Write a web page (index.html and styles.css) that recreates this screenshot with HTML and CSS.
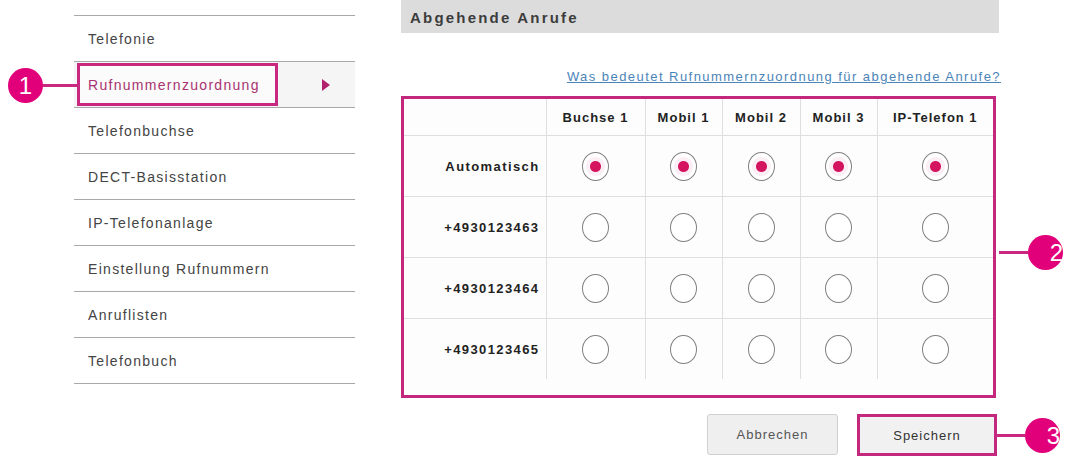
FILE: index.html
```html
<!DOCTYPE html>
<html lang="de">
<head>
    <meta charset="UTF-8">
    <title>Abgehende Anrufe</title>
    <link rel="stylesheet" href="styles.css">
</head>
<body>
    <div class="page">
        <nav class="sidenav">
            <ul>
                <li><a href="#">Telefonie</a></li>
                <li class="active">
                    <span class="callout callout-left">1</span>
                    <a href="#" class="marked">Rufnummernzuordnung</a>
                    <span class="arrow"></span>
                </li>
                <li><a href="#">Telefonbuchse</a></li>
                <li><a href="#">DECT-Basisstation</a></li>
                <li><a href="#">IP-Telefonanlage</a></li>
                <li><a href="#">Einstellung Rufnummern</a></li>
                <li><a href="#">Anruflisten</a></li>
                <li><a href="#">Telefonbuch</a></li>
            </ul>
        </nav>

        <section class="panel">
            <h2 class="panel-title">Abgehende Anrufe</h2>
            <p class="help"><a href="#">Was bedeutet Rufnummernzuordnung für abgehende Anrufe?</a></p>

            <div class="table-box">
                <table class="assign">
                    <colgroup>
                        <col class="c-label">
                        <col class="c-buchse">
                        <col class="c-mobil">
                        <col class="c-mobil2">
                        <col class="c-mobil">
                        <col class="c-ip">
                    </colgroup>
                    <thead>
                        <tr>
                            <th></th>
                            <th>Buchse 1</th>
                            <th>Mobil 1</th>
                            <th>Mobil 2</th>
                            <th>Mobil 3</th>
                            <th>IP-Telefon 1</th>
                        </tr>
                    </thead>
                    <tbody>
                        <tr>
                            <td class="label">Automatisch</td>
                            <td><span class="radio checked"></span></td>
                            <td><span class="radio checked"></span></td>
                            <td><span class="radio checked"></span></td>
                            <td><span class="radio checked"></span></td>
                            <td><span class="radio checked"></span></td>
                        </tr>
                        <tr>
                            <td class="label">+4930123463</td>
                            <td><span class="radio"></span></td>
                            <td><span class="radio"></span></td>
                            <td><span class="radio"></span></td>
                            <td><span class="radio"></span></td>
                            <td><span class="radio"></span></td>
                        </tr>
                        <tr>
                            <td class="label">+4930123464</td>
                            <td><span class="radio"></span></td>
                            <td><span class="radio"></span></td>
                            <td><span class="radio"></span></td>
                            <td><span class="radio"></span></td>
                            <td><span class="radio"></span></td>
                        </tr>
                        <tr>
                            <td class="label">+4930123465</td>
                            <td><span class="radio"></span></td>
                            <td><span class="radio"></span></td>
                            <td><span class="radio"></span></td>
                            <td><span class="radio"></span></td>
                            <td><span class="radio"></span></td>
                        </tr>
                    </tbody>
                </table>
                <span class="callout callout-right callout-table">2</span>
            </div>

            <div class="actions">
                <button class="btn">Abbrechen</button>
                <button class="btn btn-save">Speichern<span class="callout callout-right callout-save">3</span></button>
            </div>
        </section>
    </div>
</body>
</html>
```

FILE: styles.css
```css
body {
    margin: 0;
    background: #fff;
    font-family: "Liberation Sans", Arial, sans-serif;
    color: #333;
}
.page {
    display: flex;
    align-items: flex-start;
    padding-left: 74px;
    gap: 46px;
}

/* left navigation */
.sidenav {
    width: 281px;
    margin-top: 15px;
}
.sidenav ul {
    list-style: none;
    margin: 0;
    padding: 0;
    border-top: 1px solid #a8a8a8;
}
.sidenav li {
    position: relative;
    display: flex;
    align-items: center;
    height: 45px;
    border-bottom: 1px solid #a8a8a8;
}
.sidenav a {
    padding-left: 14px;
    color: #444;
    font-size: 14px;
    letter-spacing: 1.3px;
    text-decoration: none;
}
.sidenav li.active {
    background: #f5f5f5;
}
.sidenav a.marked {
    box-sizing: border-box;
    display: flex;
    align-items: center;
    width: 201px;
    height: 43px;
    margin-left: 3px;
    padding-left: 8px;
    border: 3px solid #c8287f;
    background: #fbfbfb;
    color: #a8336f;
}
.arrow {
    margin-left: 44px;
    width: 0;
    height: 0;
    border-left: 8px solid #b3216e;
    border-top: 6px solid transparent;
    border-bottom: 6px solid transparent;
}

/* annotation callouts */
.callout {
    position: absolute;
    box-sizing: border-box;
    width: 35px;
    height: 35px;
    border-radius: 50%;
    background: #e2007a;
    color: #fff;
    font-size: 24px;
    font-weight: normal;
    line-height: 35px;
    letter-spacing: 0;
}
.callout::after {
    content: "";
    position: absolute;
    top: 16px;
    height: 3px;
    background: #c8287f;
}
.callout-left {
    left: -66px;
    top: 6px;
    text-align: center;
}
.callout-left::after {
    left: 35px;
    width: 35px;
}
.callout-right {
    text-align: right;
    padding-right: 0;
}
.callout-right::after {
    right: 35px;
    width: 29px;
}
.callout-table {
    left: 624px;
    top: 136px;
}
.callout-save {
    left: 165px;
    top: 1px;
}

/* right panel */
.panel {
    width: 598px;
}
.panel-title {
    margin: 0;
    height: 33px;
    padding-left: 9px;
    background: #dcdcdc;
    color: #3c3c3c;
    font-size: 15px;
    line-height: 35px;
    letter-spacing: 2.2px;
}
.help {
    margin: 0;
    padding: 35px 0 10px;
    line-height: 18px;
    text-align: right;
    font-size: 13px;
    letter-spacing: 1.45px;
}
.help a {
    color: #4b84b8;
    margin-right: -2px;
}

.table-box {
    position: relative;
    width: 595px;
    box-sizing: border-box;
    border: 3px solid #c4287e;
    padding-bottom: 16px;
    background: #fdfdfd;
}
.assign {
    width: 100%;
    table-layout: fixed;
    border-collapse: collapse;
    font-size: 13px;
    letter-spacing: 1px;
    color: #222;
}
.c-label { width: 142px; }
.c-buchse { width: 99px; }
.c-mobil { width: 77px; }
.c-mobil2 { width: 78px; }
.c-ip { width: 116px; }
.assign th {
    height: 34px;
    font-weight: bold;
    border-bottom: 1px solid #dedede;
    border-left: 1px solid #dedede;
}
.assign th:first-child {
    border-left: none;
}
.assign td {
    height: 60px;
    text-align: center;
    border-bottom: 1px solid #dedede;
    border-left: 1px solid #dedede;
    padding: 0;
}
.assign tbody tr:last-child td {
    border-bottom: none;
}
.assign td.label {
    border-left: none;
    text-align: right;
    padding-right: 6px;
    font-weight: bold;
    letter-spacing: 1.4px;
}
.radio {
    display: inline-block;
    vertical-align: middle;
    box-sizing: border-box;
    width: 27px;
    height: 29px;
    border: 1.5px solid #808080;
    border-radius: 50%;
    background: #fff;
}
.radio.checked {
    background: radial-gradient(circle, #d4145e 0 5px, #fbeef4 6px 9px, #fff 10px);
}

/* buttons */
.actions {
    display: flex;
    justify-content: flex-end;
    gap: 19px;
    margin-top: 16px;
    padding-right: 2px;
}
.btn {
    position: relative;
    box-sizing: border-box;
    height: 41px;
    width: 131px;
    border: 1px solid #d0d0d0;
    border-radius: 3px;
    background: #efefef;
    color: #555;
    font-family: "Liberation Sans", Arial, sans-serif;
    font-size: 13px;
    letter-spacing: 1px;
}
.btn-save {
    width: 140px;
    height: 42px;
    border: 3px solid #c4287e;
    border-radius: 0;
    background: #f1f1f1;
    color: #333;
}
```
